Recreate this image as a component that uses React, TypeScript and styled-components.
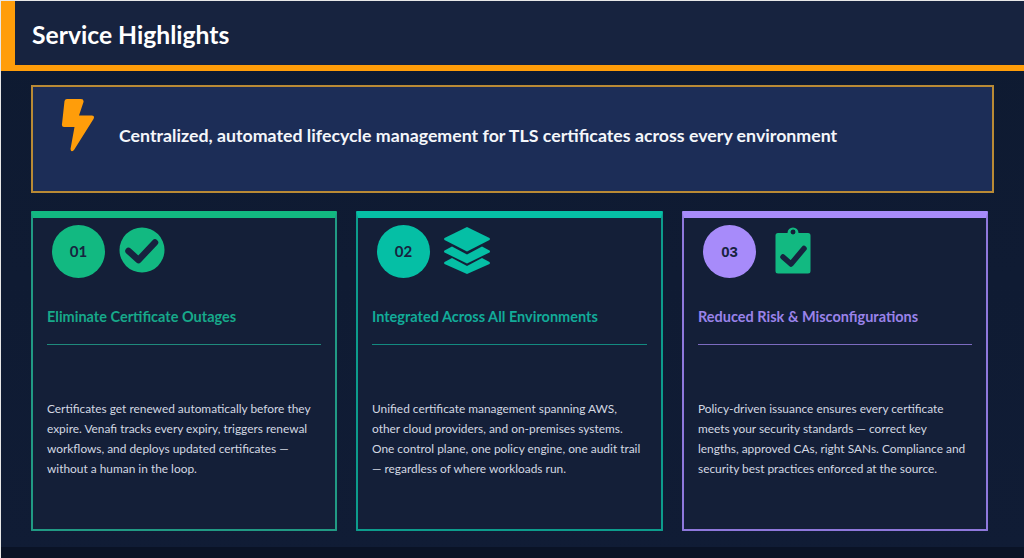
import styled, { createGlobalStyle } from 'styled-components';

const GlobalStyle = createGlobalStyle`
  html, body {
    margin: 0;
    padding: 0;
    background: #0d1830;
  }
  * {
    box-sizing: border-box;
  }
`;

const Page = styled.div`
  width: 1024px;
  height: 558px;
  overflow: hidden;
  display: flex;
  flex-direction: column;
  padding: 1px 0 0 1px;
  background: #e8e8e8;
  font-family: Lato, 'Open Sans', sans-serif;
  font-variant-ligatures: common-ligatures;
`;

const Slide = styled.div`
  flex: 1;
  display: flex;
  flex-direction: column;
  background: linear-gradient(180deg, #0e1a31 0%, #101c35 100%);
`;

const Header = styled.header`
  height: 70px;
  flex: none;
  display: flex;
  align-items: center;
  padding: 3px 0 0 17px;
  background: #17233f;
  border-left: 14px solid #ff9d0a;
  border-bottom: 6px solid #ff9d0a;
`;

const Title = styled.h1`
  margin: 0;
  font-size: 24.7px;
  line-height: 30px;
  font-weight: 700;
  color: #ffffff;
`;

const Content = styled.main`
  flex: 1;
  display: flex;
  flex-direction: column;
  gap: 18px;
  padding: 14px 30px 16px 30px;
`;

const Banner = styled.section`
  height: 108px;
  flex: none;
  display: flex;
  align-items: flex-start;
  gap: 24px;
  padding: 11px 0 0 28px;
  background: #1c2d57;
  border: 2px solid #b98a35;
`;

const BoltIcon = styled.svg`
  width: 34px;
  height: 54px;
  flex: none;
  fill: #ff9d0a;
`;

const BannerText = styled.p`
  margin: 25px 0 0;
  font-size: 17.75px;
  line-height: 24px;
  font-weight: 700;
  color: #f4f6fa;
`;

const Cards = styled.div`
  flex: 1;
  display: grid;
  grid-template-columns: 306px 307px 306px;
  column-gap: 19px;
`;

const Card = styled.article<{ $accent: string; $edge: string }>`
  display: flex;
  flex-direction: column;
  padding: 0 14px;
  background: #141f38;
  border: 2px solid ${(props) => props.$edge};
  border-top: 7px solid ${(props) => props.$accent};
  border-radius: 1px;
`;

const IconRow = styled.div`
  height: 54px;
  margin-top: 6px;
  display: flex;
  align-items: center;
  gap: 13px;
  padding-left: 5px;
`;

const NumberBadge = styled.div<{ $accent: string; $sans?: boolean }>`
  width: 53px;
  height: 53px;
  flex: none;
  display: flex;
  align-items: center;
  justify-content: center;
  border-radius: 50%;
  background: ${(props) => props.$accent};
  color: #17233f;
  font-size: 15px;
  font-weight: 700;
  font-family: ${(props) => (props.$sans ? "'Liberation Sans', sans-serif" : 'inherit')};
`;

const IconSvg = styled.svg<{ $color: string }>`
  display: block;
  width: 48px;
  height: 48px;
  flex: none;
  margin-top: -3px;
  fill: ${(props) => props.$color};
`;

const CardTitle = styled.h2<{ $color: string }>`
  margin: 29px 0 0;
  font-size: 14.5px;
  line-height: 20px;
  font-weight: 700;
  color: ${(props) => props.$color};
`;

const Divider = styled.div<{ $color: string }>`
  height: 1px;
  margin-top: 17px;
  background: ${(props) => props.$color};
`;

const CardBody = styled.p`
  max-width: 270.5px;
  margin: 54px 0 0;
  font-size: 11.9px;
  line-height: 20px;
  color: #d3d8e2;
`;

const Footer = styled.footer`
  height: 11px;
  flex: none;
  background: #0a1326;
`;

const CheckCircle = ({ color }: { color: string }) => (
  <IconSvg viewBox="0 0 48 48" $color={color}>
    <circle cx="24" cy="24" r="22.500" />
    <path d="M10.500 25 L20.500 34 L37 16.500" fill="none" stroke="#17233f" strokeWidth="6.500" strokeLinecap="round" strokeLinejoin="round" />
  </IconSvg>
);

const Layers = ({ color }: { color: string }) => (
  <IconSvg viewBox="0 0 48 48" $color={color}>
    <path d="M24 1 L46.500 12 Q47.500 13 46.500 14 L24 25.500 L1.500 14 Q0.500 13 1.500 12 Z" />
    <path d="M9 20.500 L24 28.500 L39 20.500 L46.500 24.500 Q47.500 25.500 46.500 26.500 L24 37.500 L1.500 26.500 Q0.500 25.500 1.500 24.500 Z" />
    <path d="M9 32 L24 40 L39 32 L46.500 36 Q47.500 37 46.500 38 L24 48 L1.500 38 Q0.500 37 1.500 36 Z" />
  </IconSvg>
);

const Clipboard = ({ color }: { color: string }) => (
  <IconSvg viewBox="0 0 48 48" $color={color}>
    <path
      fillRule="evenodd"
      d="M9 7 H18.500 A5.500 5.500 0 0 1 29.500 7 H39 Q41.500 7 41.500 9.500 V45 Q41.500 47.500 39 47.500 H9 Q6.500 47.500 6.500 45 V9.500 Q6.500 7 9 7 Z M24 3.500 A2.500 2.500 0 1 0 24.010 8.500 A2.500 2.500 0 1 0 24 3.500 Z"
    />
    <path d="M14 31 L22 38 L35 22.500" fill="none" stroke="#17233f" strokeWidth="5.500" strokeLinecap="round" strokeLinejoin="round" />
  </IconSvg>
);

const cards = [
  {
    number: '01',
    accent: '#12b981',
    edge: '#219a84',
    title: 'Eliminate Certificate Outages',
    titleColor: '#17a98a',
    rule: '#1f8a7c',
    body: 'Certificates get renewed automatically before they expire. Venafi tracks every expiry, triggers renewal workflows, and deploys updated certificates — without a human in the loop.',
    Icon: CheckCircle,
    iconColor: '#12b981',
  },
  {
    number: '02',
    accent: '#05bfa5',
    edge: '#0d9c8c',
    title: 'Integrated Across All Environments',
    titleColor: '#12ab99',
    rule: '#138a80',
    body: 'Unified certificate management spanning AWS, other cloud providers, and on-premises systems. One control plane, one policy engine, one audit trail — regardless of where workloads run.',
    Icon: Layers,
    iconColor: '#05bfa5',
  },
  {
    number: '03',
    accent: '#a78bfa',
    edge: '#8f78dc',
    title: 'Reduced Risk & Misconfigurations',
    titleColor: '#9a83ea',
    rule: '#7c6bc0',
    body: 'Policy-driven issuance ensures every certificate meets your security standards — correct key lengths, approved CAs, right SANs. Compliance and security best practices enforced at the source.',
    Icon: Clipboard,
    iconColor: '#12b981',
    sans: true,
  },
];

const App = () => (
  <Page>
    <GlobalStyle />
    <Slide>
      <Header>
        <Title>Service Highlights</Title>
      </Header>
      <Content>
        <Banner>
          <BoltIcon viewBox="0 0 34 54">
            <path d="M6 1 H20 Q23 1 22.500 4 L18 17.500 H31 Q34 17.500 32.500 21 L13 52 Q10 55 9.500 51 L13.500 29 H3 Q0.500 29 1 26 L3.500 3 Q4 1 6 1 Z" />
          </BoltIcon>
          <BannerText>Centralized, automated lifecycle management for TLS certificates across every environment</BannerText>
        </Banner>
        <Cards>
          {cards.map(({ number, accent, edge, title, titleColor, rule, body, Icon, iconColor, sans }) => (
            <Card key={number} $accent={accent} $edge={edge}>
              <IconRow>
                <NumberBadge $accent={accent} $sans={sans}>
                  {number}
                </NumberBadge>
                <Icon color={iconColor} />
              </IconRow>
              <CardTitle $color={titleColor}>{title}</CardTitle>
              <Divider $color={rule} />
              <CardBody>{body}</CardBody>
            </Card>
          ))}
        </Cards>
      </Content>
      <Footer />
    </Slide>
  </Page>
);

export default App;
